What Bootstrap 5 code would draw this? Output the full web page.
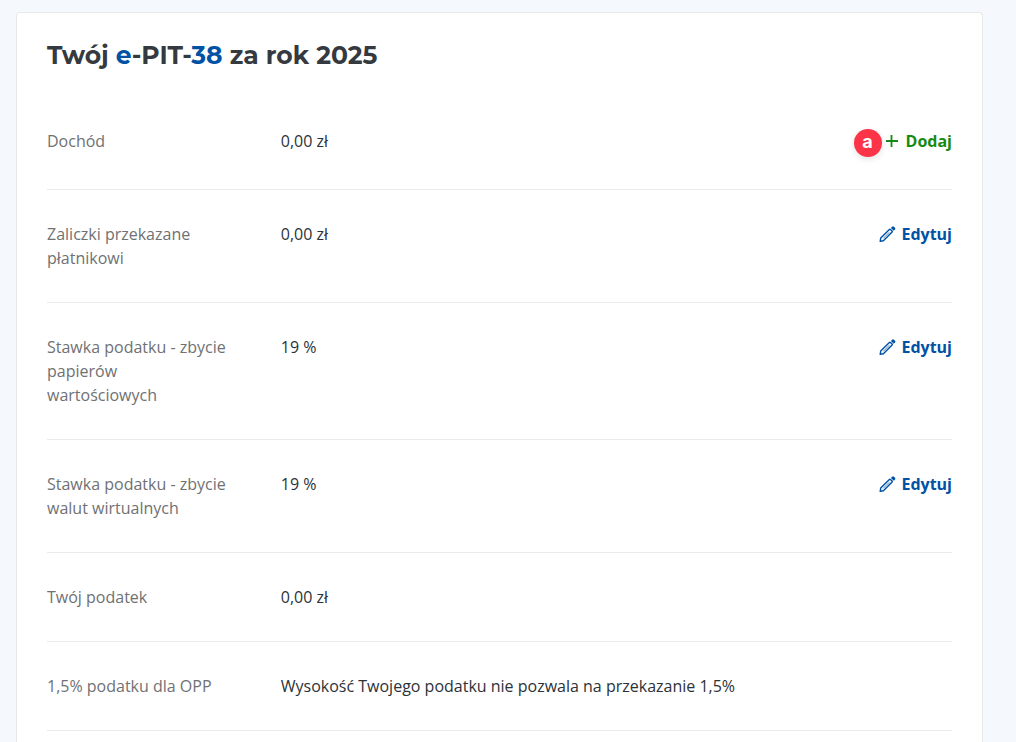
<!DOCTYPE html>
<html lang="pl">
<head>
<meta charset="utf-8">
<meta name="viewport" content="width=device-width, initial-scale=1">
<title>Twój e-PIT-38 za rok 2025</title>
<link href="https://cdn.jsdelivr.net/npm/bootstrap@5.3.0/dist/css/bootstrap.min.css" rel="stylesheet">
<style>
  body {
    background: #f5f8fd;
    color: #343a40;
    font-family: "Open Sans", "Noto Sans", sans-serif;
    font-size: 16px;
    line-height: 24px;
  }
  .page { padding: 12px 33px 0 16px; }
  .summary {
    border: 1px solid #e6e8ea;
    border-bottom: 0;
    border-radius: 4px 4px 0 0;
    padding: 24px 30px 11px;
  }
  .summary-title {
    font-family: Montserrat, Inter, sans-serif;
    font-size: 25px;
    font-weight: 700;
    line-height: 36px;
    margin-bottom: 24px;
  }
  .accent { color: #0052a5; }
  .entry {
    --bs-gutter-x: 30px;
    padding: 32px 0;
  }
  .entries > div { border-bottom: 1px solid #e9ebed; }
  .entry-label { color: #6f7173; font-weight: 400; padding-right: 35px; }
  .entry-value { color: #2c3238; }
  .action { color: #0052a5; font-weight: 700; text-decoration: none; }
  .action:hover { text-decoration: underline; }
  .action-add { color: #158a15; }
  .marker {
    width: 28px;
    height: 28px;
    background: #fc3447;
    color: #fff;
    font: 700 18px/26px Inter, "Liberation Sans", sans-serif;
    box-shadow: 0 2px 6px rgba(0, 0, 0, .12);
  }
</style>
</head>
<body>
<main class="page min-vh-100 d-flex flex-column">
  <section class="summary bg-white flex-grow-1">
    <h1 class="summary-title">Twój <span class="accent">e</span>-PIT-<span class="accent">38</span> za rok 2025</h1>
    <dl class="entries mb-0">
      <div>
        <div class="row entry">
          <dt class="col-3 entry-label">Dochód</dt>
          <dd class="col entry-value mb-0">0,00 zł</dd>
          <dd class="col-auto mb-0 d-flex align-items-start">
            <span class="marker rounded-circle text-center me-1">a</span>
            <a href="#" class="action action-add d-flex align-items-center">
              <svg class="me-2" width="12" height="12" viewBox="0 0 12 12" fill="none" stroke="currentColor" stroke-width="1.8" aria-hidden="true"><path d="M5.5 0v12M0 6h12"/></svg>Dodaj</a>
          </dd>
        </div>
      </div>
      <div>
        <div class="row entry">
          <dt class="col-3 entry-label">Zaliczki przekazane płatnikowi</dt>
          <dd class="col entry-value mb-0">0,00 zł</dd>
          <dd class="col-auto mb-0">
            <a href="#" class="action d-flex align-items-center">
              <svg class="me-1" width="18" height="18" viewBox="0 0 18 18" aria-hidden="true"><use href="#pencil"/></svg>Edytuj</a>
          </dd>
        </div>
      </div>
      <div>
        <div class="row entry">
          <dt class="col-3 entry-label">Stawka podatku - zbycie papierów wartościowych</dt>
          <dd class="col entry-value mb-0">19 %</dd>
          <dd class="col-auto mb-0">
            <a href="#" class="action d-flex align-items-center">
              <svg class="me-1" width="18" height="18" viewBox="0 0 18 18" aria-hidden="true"><use href="#pencil"/></svg>Edytuj</a>
          </dd>
        </div>
      </div>
      <div>
        <div class="row entry">
          <dt class="col-3 entry-label">Stawka podatku - zbycie walut wirtualnych</dt>
          <dd class="col entry-value mb-0">19 %</dd>
          <dd class="col-auto mb-0">
            <a href="#" class="action d-flex align-items-center">
              <svg class="me-1" width="18" height="18" viewBox="0 0 18 18" aria-hidden="true"><use href="#pencil"/></svg>Edytuj</a>
          </dd>
        </div>
      </div>
      <div>
        <div class="row entry">
          <dt class="col-3 entry-label">Twój podatek</dt>
          <dd class="col entry-value mb-0">0,00 zł</dd>
        </div>
      </div>
      <div>
        <div class="row entry">
          <dt class="col-3 entry-label">1,5% podatku dla OPP</dt>
          <dd class="col entry-value mb-0">Wysokość Twojego podatku nie pozwala na przekazanie 1,5%</dd>
        </div>
      </div>
    </dl>
  </section>
</main>
<svg class="d-none" aria-hidden="true">
  <symbol id="pencil" viewBox="0 0 18 18">
    <path d="M1.2 16.3l.5-3.2 8.7-8.7q.5-.5 1 0l1.7 1.7q.5.5 0 1l-8.7 8.7z" fill="none" stroke="currentColor" stroke-width="1.4" stroke-linejoin="round"/>
    <path d="M4.3 13.3l6-6" fill="none" stroke="currentColor" stroke-width=".7"/>
    <path d="M11.9 2.9l1.2-1.2a1.3 1.3 0 0 1 1.8 0l1.1 1.1a1.3 1.3 0 0 1 0 1.8l-1.2 1.2z" fill="currentColor"/>
  </symbol>
</svg>
<script src="https://cdn.jsdelivr.net/npm/bootstrap@5.3.0/dist/js/bootstrap.bundle.min.js"></script>
</body>
</html>
